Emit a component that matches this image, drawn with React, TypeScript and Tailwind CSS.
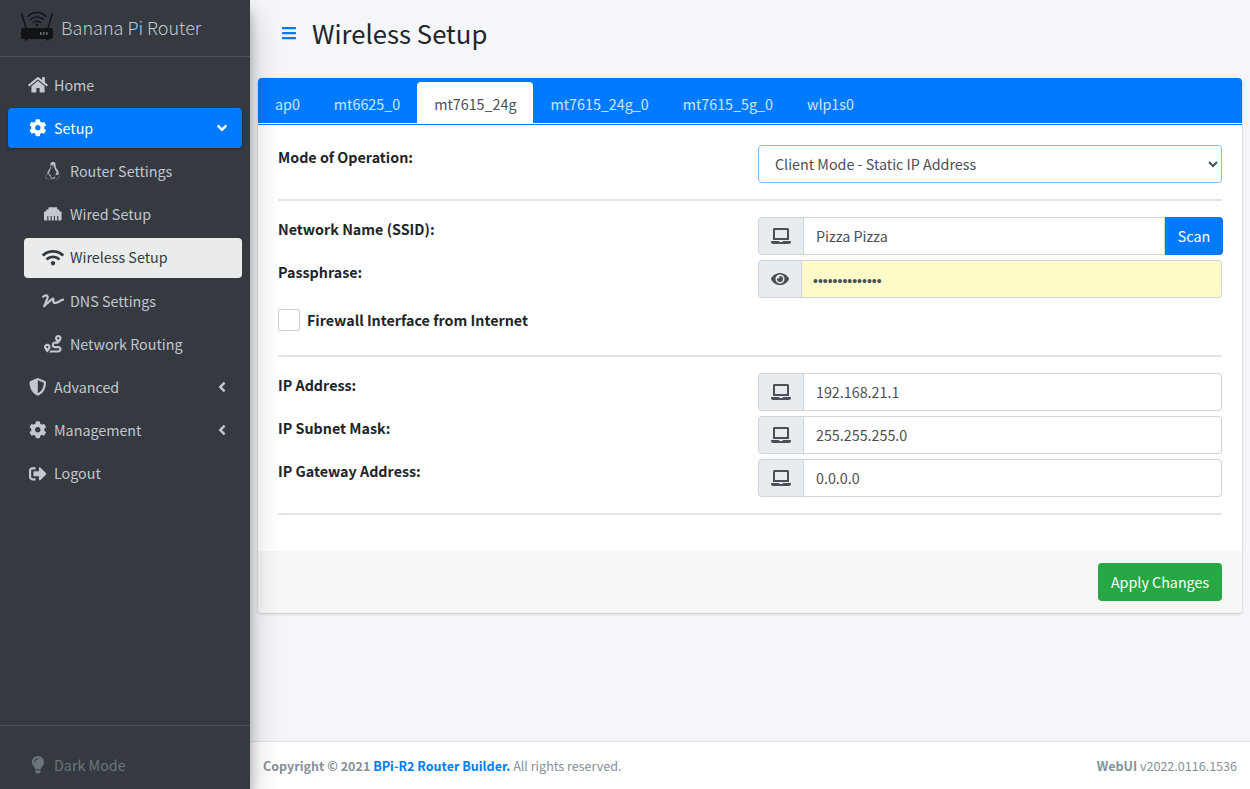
import type { ReactNode } from 'react';
import {
  FaAngleDown,
  FaAngleLeft,
  FaBars,
  FaCog,
  FaEthernet,
  FaEye,
  FaHome,
  FaLaptop,
  FaLightbulb,
  FaLinux,
  FaRoute,
  FaShieldAlt,
  FaSignature,
  FaSignOutAlt,
  FaWifi,
} from 'react-icons/fa';

const tabs = ['ap0', 'mt6625_0', 'mt7615_24g', 'mt7615_24g_0', 'mt7615_5g_0', 'wlp1s0'];

function RouterLogo() {
  return (
    <svg width="32" height="30" viewBox="0 0 32 30" className="-mt-1 shrink-0">
      <g fill="none" stroke="#111317" strokeWidth="1.5" strokeLinecap="round">
        <path d="M7 5.5 C11 0 21 0 25 5.5" />
        <path d="M9.5 8.5 C13 5 19 5 22.5 8.5" />
        <path d="M12.5 11.5 C14.5 10 17.5 10 19.5 11.5" />
        <path d="M0.8 3 L5 17" />
        <path d="M31.2 3 L27 17" />
      </g>
      <circle cx="16" cy="14" r="1.4" fill="#111317" />
      <rect x="0" y="17" width="32" height="11" rx="2" fill="#111317" />
      <rect x="4" y="27" width="2.5" height="2.5" fill="#111317" />
      <rect x="25.5" y="27" width="2.5" height="2.5" fill="#111317" />
      <g fill="#6a6f76">
        <rect x="19" y="21" width="1.5" height="3" />
        <rect x="22" y="21" width="1.5" height="3" />
        <rect x="25" y="21" width="1.5" height="3" />
      </g>
    </svg>
  );
}

function NavItem({
  icon,
  label,
  variant,
  sub,
  arrow,
}: {
  icon: ReactNode;
  label: string;
  variant?: 'primary' | 'light';
  sub?: boolean;
  arrow?: ReactNode;
}) {
  const tone =
    variant === 'primary'
      ? 'bg-[#007bff] text-white shadow-[0_1px_3px_rgba(0,0,0,0.3)]'
      : variant === 'light'
        ? 'bg-[#e9ecea] text-[#343a40]'
        : 'text-[#c2c7d0]';
  return (
    <li
      className={`mb-[3.21px] flex h-10 items-center rounded pb-px ${sub ? 'ml-6 pl-[16px]' : 'ml-2 pl-5'} mr-2 pr-3.5 ${tone}`}
    >
      <span className={`flex shrink-0 items-center justify-center ${sub ? 'mr-1 w-[26px]' : 'mr-1.5 w-5'}`}>
        {icon}
      </span>
      <span className="text-[14.3px] leading-6">{label}</span>
      {arrow && <span className="ml-auto flex w-3 justify-center text-[16px]">{arrow}</span>}
    </li>
  );
}

function FieldLabel({ children }: { children: ReactNode }) {
  return <label className="block text-[14.3px] font-bold leading-6 text-[#212529]">{children}</label>;
}

function AddonInput({ value }: { value: string }) {
  return (
    <div className="flex h-[38px]">
      <span className="flex w-[46px] items-center justify-center rounded-l border border-[#ced4da] bg-[#e9ecef] text-[#495057]">
        <FaLaptop className="h-4 w-5" />
      </span>
      <input
        readOnly
        defaultValue={value}
        className="min-w-0 flex-1 rounded-r border border-l-0 border-[#ced4da] bg-white px-3 text-[14.3px] text-[#495057] outline-none"
      />
    </div>
  );
}

function FormRow({ label, children }: { label: string; children: ReactNode }) {
  return (
    <div className="mb-[5px] flex">
      <div className="w-[480px]">
        <FieldLabel>{label}</FieldLabel>
      </div>
      <div className="flex-1">{children}</div>
    </div>
  );
}

export default function App() {
  return (
    <div className="flex h-screen overflow-hidden bg-[#f4f6f9] font-['Noto_Sans_CJK_SC','Source_Sans_Pro',sans-serif]">
      <aside className="relative z-10 flex w-[250px] shrink-0 flex-col bg-[#343a40] shadow-[0_14px_28px_rgba(0,0,0,0.25),0_10px_10px_rgba(0,0,0,0.22)]">
        <div className="flex h-[57px] items-center gap-2 border-b border-[#4b545c] pl-[21px]">
          <RouterLogo />
          <span className="pb-[2px] text-[18px] font-light text-[#c2c7d0]">Banana Pi Router</span>
        </div>
        <ul className="pt-2">
          <NavItem icon={<FaHome className="h-[17.6px] w-[20px]" />} label="Home" />
          <NavItem
            icon={<FaCog className="h-[17.6px] w-[17.6px]" />}
            label="Setup"
            variant="primary"
            arrow={<FaAngleDown />}
          />
          <NavItem sub icon={<FaLinux className="h-[17.6px] w-[15.4px]" />} label="Router Settings" />
          <NavItem sub icon={<FaEthernet className="h-[17.6px] w-[17.6px]" />} label="Wired Setup" />
          <NavItem sub icon={<FaWifi className="h-[17.6px] w-[22px]" />} label="Wireless Setup" variant="light" />
          <NavItem sub icon={<FaSignature className="h-[17.6px] w-[22px]" />} label="DNS Settings" />
          <NavItem sub icon={<FaRoute className="h-[17.6px] w-[17.6px]" />} label="Network Routing" />
          <NavItem icon={<FaShieldAlt className="h-[17.6px] w-[17.6px]" />} label="Advanced" arrow={<FaAngleLeft />} />
          <NavItem icon={<FaCog className="h-[17.6px] w-[17.6px]" />} label="Management" arrow={<FaAngleLeft />} />
          <NavItem icon={<FaSignOutAlt className="h-[17.6px] w-[17.6px]" />} label="Logout" />
        </ul>
        <div className="mt-auto flex h-[64px] items-center border-t border-[#4b545c] pl-7 pt-[15px] text-[#6c757d]">
          <span className="mr-1.5 flex w-5 justify-center">
            <FaLightbulb className="h-[17.6px] w-[12px]" />
          </span>
          <span className="text-[14.3px]">Dark Mode</span>
        </div>
      </aside>

      <div className="flex min-w-0 flex-1 flex-col">
        <header className="flex h-[78px] items-center pb-[12px] pl-8">
          <FaBars className="h-4 w-[14px] text-[#007bff]" />
          <h1 className="ml-4 text-[25.7px] font-normal leading-[34px] text-[#212529]">Wireless Setup</h1>
        </header>

        <main className="mx-2 overflow-hidden rounded bg-white shadow-[0_0_1px_rgba(0,0,0,0.125),0_1px_3px_rgba(0,0,0,0.2)]">
          <div className="border-b border-[#007bff]">
            <div className="flex h-[46px] items-end border-b border-white bg-[#007bff]">
              {tabs.map((tab) => (
                <span
                  key={tab}
                  className={
                    tab === 'mt7615_24g'
                      ? 'flex h-[41px] items-center rounded-t bg-white px-[17px] pt-0.5 text-[14.3px] text-[#495057]'
                      : 'flex h-[41px] items-center px-[17px] pt-0.5 text-[14.3px] text-white/80'
                  }
                >
                  {tab}
                </span>
              ))}
            </div>
          </div>

          <div className="px-5 pt-5">
            <div className="flex">
              <div className="w-[480px]">
                <FieldLabel>Mode of Operation:</FieldLabel>
              </div>
              <select
                defaultValue="static"
                className="h-[38px] flex-1 rounded border border-[#80bdff] bg-white px-3 pb-[2px] text-[14.3px] text-[#495057] outline-none"
              >
                <option value="static">Client Mode - Static IP Address</option>
              </select>
            </div>
            <hr className="mb-4 mt-4 border-t-2 border-[#e5e5e5]" />

            <FormRow label="Network Name (SSID):">
              <div className="flex h-[38px]">
                <span className="flex w-[46px] items-center justify-center rounded-l border border-[#ced4da] bg-[#e9ecef] text-[#495057]">
                  <FaLaptop className="h-4 w-5" />
                </span>
                <input
                  readOnly
                  defaultValue="Pizza Pizza"
                  className="min-w-0 flex-1 border border-l-0 border-[#ced4da] bg-white px-3 text-[14.3px] text-[#495057] outline-none"
                />
                <button className="-mr-px w-[58px] rounded-r bg-[#007bff] text-[14.3px] text-white">Scan</button>
              </div>
            </FormRow>
            <FormRow label="Passphrase:">
              <div className="flex h-[38px]">
                <span className="flex w-11 items-center justify-center rounded-l border border-[#ced4da] bg-[#e9ecef] text-[#495057]">
                  <FaEye className="h-4 w-[18px]" />
                </span>
                <input
                  readOnly
                  type="password"
                  defaultValue="PizzaPizza1234"
                  className="min-w-0 flex-1 rounded-r border border-l-0 border-[#ced4da] bg-[#fffbc8] pl-[11px] pr-3 pt-1 font-['Liberation_Sans'] text-[14px] text-[#495057] outline-none"
                />
              </div>
            </FormRow>

            <div className="mt-[10px] flex items-center">
              <span className="h-[22px] w-[22px] rounded-[2px] border border-[#d3cfc8] bg-white" />
              <span className="ml-[7px] text-[14.3px] font-bold leading-6 text-[#212529]">
                Firewall Interface from Internet
              </span>
            </div>
            <hr className="mb-4 mt-[23px] border-t-2 border-[#e5e5e5]" />

            <FormRow label="IP Address:">
              <AddonInput value="192.168.21.1" />
            </FormRow>
            <FormRow label="IP Subnet Mask:">
              <AddonInput value="255.255.255.0" />
            </FormRow>
            <FormRow label="IP Gateway Address:">
              <AddonInput value="0.0.0.0" />
            </FormRow>
            <hr className="mt-4 border-t-2 border-[#e5e5e5]" />
          </div>

          <div className="mt-9 flex h-[62px] items-center justify-end bg-[#f7f7f7] px-5">
            <button className="h-[38px] w-[124px] rounded bg-[#28a745] text-[14.3px] text-white">Apply Changes</button>
          </div>
        </main>

        <footer className="mt-auto flex h-[48px] items-center justify-between border-t border-[#dee2e6] bg-white px-[13px] pt-[2px] text-[12.55px] text-[#869099]">
          <span>
            <strong className="font-bold">
              Copyright © 2021 <span className="text-[#007bff]">BPi-R2 Router Builder.</span>
            </strong>{' '}
            All rights reserved.
          </span>
          <span>
            <strong className="font-bold">WebUI</strong> v2022.0116.1536
          </span>
        </footer>
      </div>
    </div>
  );
}
